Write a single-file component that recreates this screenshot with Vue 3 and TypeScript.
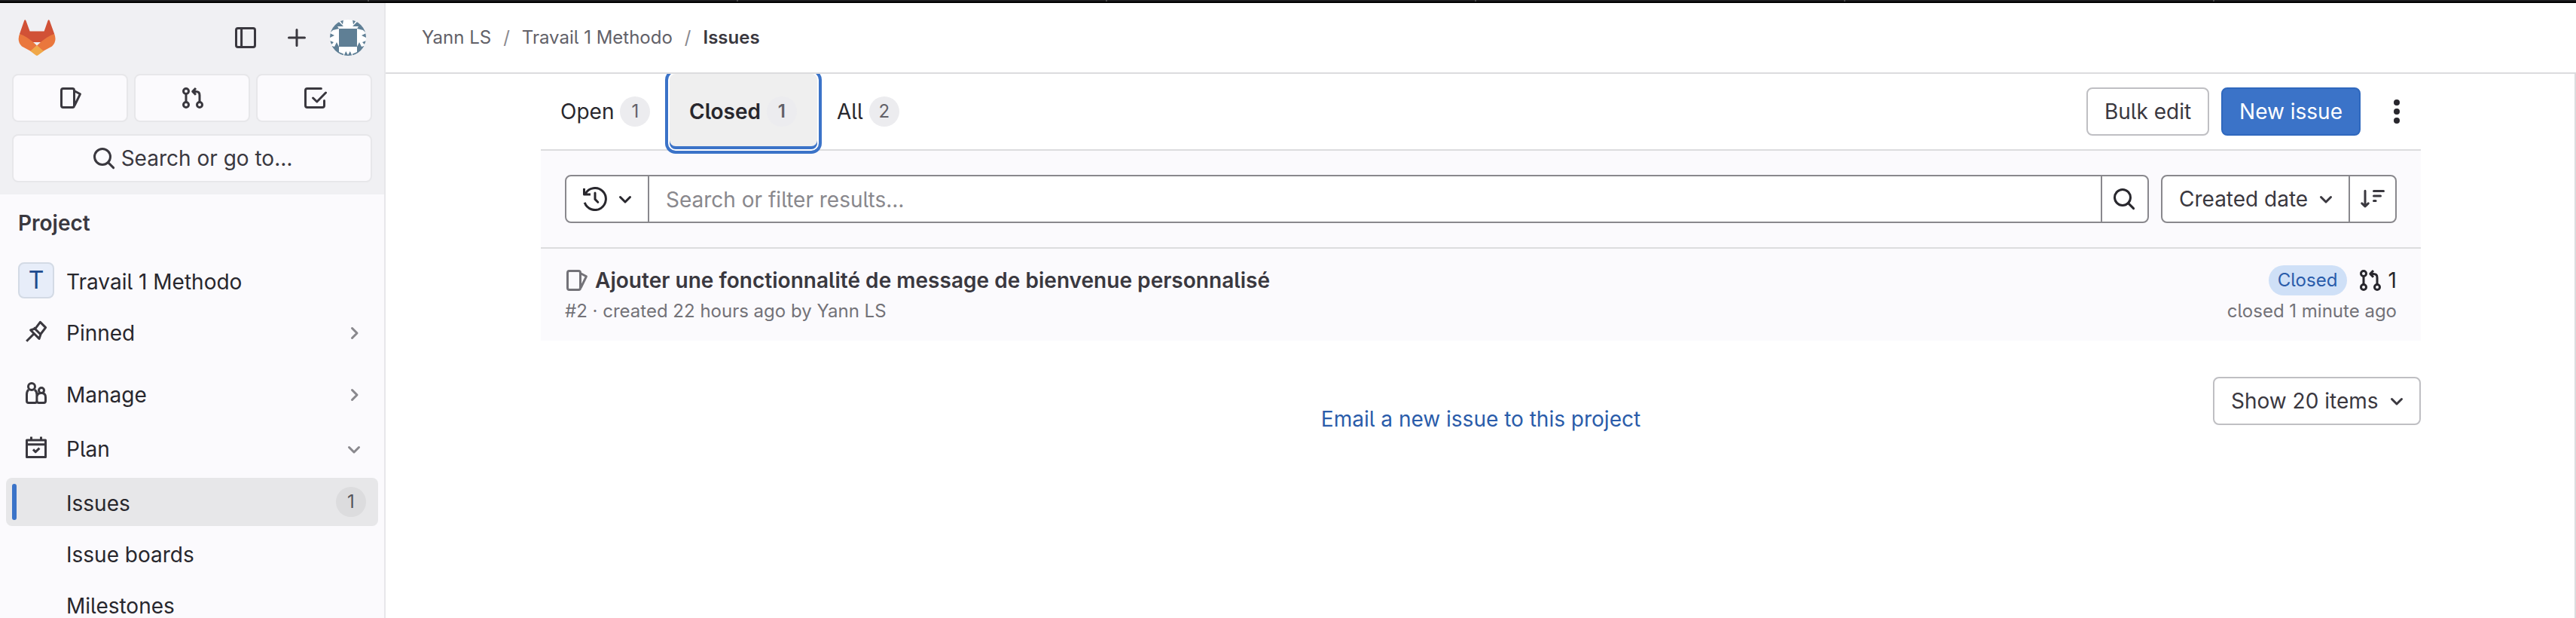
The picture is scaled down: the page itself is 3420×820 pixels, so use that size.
<script setup lang="ts">
interface NavItem {
  label: string
  icon?: string
  chevron?: string
  count?: number
  kind: string
}

const icons: Record<string, string> = {
  pin: 'M10.7 1.7l3.6 3.6-3.2 4.2-1.1 3.2-5.7-5.7 3.2-1.1zM6.6 9.4l-5 5M6.4 5.3l4.3 4.3',
  calendar: 'M4.75.7v2M11.25.7v2M1.75 3.05h12.5v11.2H1.75zM1.75 5.9h12.5M6 9.2l1.6 1.6 2.6-2.5',
}

const nav: NavItem[] = [
  { label: 'Pinned', icon: 'pin', chevron: 'right', kind: 'pinned' },
  { label: 'Manage', icon: 'people', chevron: 'right', kind: 'manage' },
  { label: 'Plan', icon: 'calendar', chevron: 'down', kind: 'plan' },
]
const sub: NavItem[] = [
  { label: 'Issues', count: 1, kind: 'active' },
  { label: 'Issue boards', kind: 'plain' },
  { label: 'Milestones', kind: 'plain' },
]
</script>

<template>
  <div class="page">
    <div class="strip"></div>
    <div class="body">
      <aside class="side">
        <div class="top">
          <div class="brand">
            <svg class="logo" viewBox="0 0 50 48">
              <path fill="#d15136" d="M2 19 8.2 1.2q1-2 2.2 0L15.6 15.6H34.600L39.600 1.200q1-2 2.200 0L48.200 19 40 30H10z" />
              <path fill="#ea773d" d="M2 19Q-1.800 29 5 35.500L17 42 25 34.400Q12 22 2 19zM48.200 19Q52 29 45 35.500L33 42 25 34.400Q38 22 48.200 19z" />
              <path fill="#f0a848" d="M16.200 41.700 25 34.400l9 7.300-7.500 5.600q-1.500 1-3 0z" />
            </svg>
            <div class="tools">
              <svg class="ico" viewBox="0 0 16 16"><rect x="1.75" y="1.75" width="12.500" height="12.500" rx="1.200" /><path d="M5.300 2v12" /></svg>
              <svg class="ico plus" viewBox="0 0 16 16"><path stroke-linecap="round" d="M8 2.750v10.500M2.750 8h10.500" /></svg>
              <svg class="avatar" viewBox="0 0 48 48">
                <defs>
                  <clipPath id="round"><circle cx="24" cy="24" r="24" /></clipPath>
                  <g id="corner">
                    <path d="M12 0l2.500 3L17 6.500 18 0zM0 18l4-4 8-2-2-3 8 0-5-5-4-4H0zM0 18l6 3-6 3zM0 28l5 2-3 3zM0 34l6 2 3-6 3 6v7l6 2.500V48H0z" />
                  </g>
                </defs>
                <g clip-path="url(#round)">
                  <rect width="48" height="48" fill="#fff" />
                  <g fill="#5f7f95">
                    <rect x="12" y="12" width="24" height="24" />
                    <use href="#corner" />
                    <use href="#corner" transform="matrix(-1 0 0 1 48 0)" />
                    <path d="m18.500 48 2.700-6 2.800 5 2.800-5 2.700 6z" />
                  </g>
                </g>
              </svg>
            </div>
          </div>
          <div class="shortcuts">
            <div class="tile">
              <svg class="ico" viewBox="0 0 16 16"><rect x="1.750" y="1.750" width="8.500" height="12.500" rx="1.200" /><path d="m10.700 3.500 3.500 1.900L10.500 13" /></svg>
            </div>
            <div class="tile">
              <svg class="ico" viewBox="0 0 16 16"><circle cx="3.500" cy="3.500" r="1.750" /><circle cx="3.500" cy="12.500" r="1.750" /><circle cx="12.500" cy="12.500" r="1.750" /><path d="M3.500 5.300v5.400M12.500 10.700V6.200q0-2.400-2.400-2.400H8.500M10 1.500 7.900 3.700 10 5.900" /></svg>
            </div>
            <div class="tile">
              <svg class="ico" viewBox="0 0 16 16"><path stroke-linecap="round" d="M12.200 1.750H3q-1.250 0-1.250 1.250v10q0 1.250 1.250 1.250h10q1.250 0 1.250-1.250V9.800M6.800 8l2.600 2.500 5.850-6" /></svg>
            </div>
          </div>
          <div class="goto">
            <svg class="ico" viewBox="0 0 16 16"><circle cx="7" cy="7" r="5.250" /><path stroke-linecap="round" d="m10.800 10.800 3.500 3.500" /></svg>
            <span>Search or go to…</span>
          </div>
        </div>
        <nav class="menu">
          <div class="heading">Project</div>
          <div class="row project"><span class="tee">T</span><span class="label">Travail 1 Methodo</span></div>
          <div v-for="n in nav" :key="n.label" class="row" :class="n.kind">
            <svg v-if="n.icon === 'people'" class="ico" viewBox="0 0 16 16"><circle cx="5" cy="3.500" r="2.250" /><circle cx="11.500" cy="6" r="1.750" /><path d="M3 5.600q-1.250 1-1.250 3v4.400q0 1.250 1.250 1.250h4.200q1.250 0 1.250-1.250V8.600q0-2-1.450-3M8.500 13q.1 1.250 1.250 1.250h3.250q1.250 0 1.250-1.250v-2.500q0-2.750-2.750-2.750T8.600 10" /></svg>
            <svg v-else class="ico" viewBox="0 0 16 16"><path :d="icons[n.icon!]" /></svg>
            <span class="label">{{ n.label }}</span>
            <svg class="ico chev" viewBox="0 0 16 16"><path stroke-linecap="round" :d="n.chevron === 'right' ? 'm6.750 4.750 3.250 3.250-3.250 3.250' : 'M4.750 6.750 8 10l3.250-3.250'" /></svg>
          </div>
          <div v-for="n in sub" :key="n.label" class="row sub" :class="n.kind">
            <span class="mark"></span>
            <span class="label">{{ n.label }}</span>
            <span v-if="n.count" class="count">{{ n.count }}</span>
          </div>
        </nav>
      </aside>

      <main class="main">
        <header class="crumbs">
          <span>Yann LS</span><i>/</i><span>Travail 1 Methodo</span><i>/</i><b>Issues</b>
        </header>
        <section class="content">
          <div class="wrap">
            <div class="tabs">
              <div class="tab open">Open<span class="pill">1</span></div>
              <div class="tab closed">Closed<span class="pill">1</span></div>
              <div class="tab all">All<span class="pill">2</span></div>
              <div class="actions">
                <button class="btn bulk">Bulk edit</button>
                <button class="btn new">New issue</button>
                <svg class="kebab" viewBox="0 0 16 16"><circle cx="8" cy="2" r="2" /><circle cx="8" cy="8" r="2" /><circle cx="8" cy="14" r="2" /></svg>
              </div>
            </div>
            <div class="filters">
              <div class="field">
                <div class="history">
                  <svg class="ico dark" viewBox="0 0 16 16"><path d="M1.100 10.400A7.250 7.250 0 1 0 1.600 4.500M.75 1V5H5" /><path stroke-linecap="round" d="M8 4v4.200l1.900 1.900" /></svg>
                  <svg class="ico dark" viewBox="0 0 16 16"><path stroke-linecap="round" d="M4.750 6.750 8 10l3.250-3.250" /></svg>
                </div>
                <div class="query">Search or filter results…</div>
                <div class="go"><svg class="ico dark" viewBox="0 0 16 16"><circle cx="7" cy="7" r="5.250" /><path stroke-linecap="round" d="m10.800 10.800 3.500 3.500" /></svg></div>
              </div>
              <div class="sort">
                <div class="by">Created date<svg class="ico" viewBox="0 0 16 16"><path stroke-linecap="round" d="M4.750 6.750 8 10l3.250-3.250" /></svg></div>
                <div class="dir"><svg class="ico" viewBox="0 0 16 16"><path stroke-linecap="round" d="M3 2.600v10.200M.9 10.900 3 12.900l2.100-2M8.750 2.750h6.500M8.750 6h4.500M8.750 9.250h1.300" /></svg></div>
              </div>
            </div>
            <div class="issue">
              <div class="left">
                <div class="title">
                  <svg class="ico" viewBox="0 0 16 16"><rect x="1.750" y="1.750" width="8.500" height="12.500" rx="1.200" /><path d="m10.700 3.500 3.500 1.900L10.500 13" /></svg>
                  <span>Ajouter une fonctionnalité de message de bienvenue personnalisé</span>
                </div>
                <div class="meta">#2 · created 22 hours ago by Yann LS</div>
              </div>
              <div class="right">
                <div class="state">
                  <span class="badge">Closed</span>
                  <svg class="ico dark" viewBox="0 0 16 16"><circle cx="3.500" cy="3.500" r="1.750" /><circle cx="3.500" cy="12.500" r="1.750" /><circle cx="12.500" cy="12.500" r="1.750" /><path d="M3.500 5.300v5.400M12.500 10.700V6.200q0-2.400-2.400-2.400H8.500M10 1.500 7.900 3.700 10 5.900" /></svg>
                  <span class="num">1</span>
                </div>
                <div class="meta">closed 1 minute ago</div>
              </div>
            </div>
            <div class="foot">
              <span></span>
              <a class="mail">Email a new issue to this project</a>
              <button class="btn show">Show 20 items<svg class="ico" viewBox="0 0 16 16"><path stroke-linecap="round" d="M4.750 6.750 8 10l3.250-3.250" /></svg></button>
            </div>
          </div>
        </section>
      </main>
    </div>
  </div>
</template>

<style>
body { margin: 0; background: #fff; overflow: hidden; }
</style>

<style scoped>
* { box-sizing: border-box; }
.page {
  width: 3420px; height: 820px; overflow: hidden;
  display: flex; flex-direction: column;
  font-family: Inter, "Liberation Sans", sans-serif;
  font-feature-settings: "cv05";
  font-size: 28px; line-height: 40px; color: #28272d; white-space: nowrap;
}
.strip { height: 4px; flex: none; background: repeating-linear-gradient(90deg, #1c1c1e 0 488px, #4a4a4c 488px 490px); border-bottom: 2px solid #000; }
.body { display: flex; flex: 1; min-height: 0; }
.ico { width: 32px; height: 32px; flex: none; fill: none; stroke: #3a383f; stroke-width: 1.5; stroke-linejoin: round; }
.ico.dark { stroke: #28272d; }

.side { width: 512px; flex: none; overflow: hidden; background: #fbfafd; border-right: 2px solid #e7e7ea; }
.top { height: 254px; background: #f0f0f3; padding: 22px 16px 16px; display: flex; flex-direction: column; color: #3a383f; }
.brand { height: 48px; display: flex; justify-content: space-between; padding: 0 8px; margin-bottom: 24px; }
.logo { width: 50px; height: 48px; }
.tools { display: flex; align-items: center; gap: 36px; }
.plus { margin-right: -8px; }
.avatar { width: 48px; height: 48px; }
.shortcuts { display: grid; grid-template-columns: repeat(3, 1fr); gap: 8px; margin-bottom: 16px; }
.tile, .goto { height: 64px; border: 2px solid #e7e7ea; border-radius: 8px; background: #fbfafd; display: flex; align-items: center; justify-content: center; }
.tile { padding-left: 2px; }
.goto { gap: 7px; }

.menu { padding: 16px 8px 0; }
.heading { height: 44px; line-height: 44px; padding-left: 16px; font-weight: 600; color: #3a383f; margin-bottom: 22px; }
.row { height: 64px; margin-bottom: 4px; display: flex; align-items: center; border-radius: 8px; padding: 0 16px 0 24px; }
.row .ico { margin-right: 24px; }
.row .chev { margin: 4px 0 0 auto; stroke: #89888d; }
.label { padding-top: 3px; }
.project { padding-left: 16px; }
.tee { width: 48px; height: 48px; margin-right: 16px; border: 2px solid #d3dae5; border-radius: 8px; background: #e7edf9; color: #1f4b8e; font-size: 32px; display: flex; align-items: center; justify-content: center; }
.pinned { margin-bottom: 18px; }
.manage, .plan { margin-bottom: 8px; }
.sub { padding-left: 8px; }
.mark { width: 6px; height: 48px; border-radius: 3px; margin-right: 66px; }
.active { background: #e7e7e9; }
.active .mark { background: #3b73c8; }
.count { margin-left: auto; width: 40px; height: 40px; border-radius: 20px; background: #dcdcde; color: #56555b; font-size: 24px; text-align: center; }

.main { flex: 1; display: flex; flex-direction: column; min-width: 0; }
.crumbs { height: 94px; flex: none; border-bottom: 2px solid #dcdcde; padding: 0 48px; display: flex; align-items: center; font-size: 24px; color: #626168; }
.crumbs i { font-style: normal; color: #89888d; margin: 0 16px; }
.crumbs b { font-weight: 600; color: #3a383f; }
.content { flex: 1; overflow: hidden; border-right: 2px solid #dcdcde; padding-left: 206px; }
.wrap { width: 2496px; }
.tabs { height: 102px; border-bottom: 2px solid #dcdcde; display: flex; align-items: center; }
.tab { height: 100px; display: flex; align-items: center; }
.pill { width: 40px; height: 40px; margin-left: 8px; border-radius: 20px; background: #ececef; color: #626168; font-size: 24px; text-align: center; }
.open { padding-left: 26px; width: 171px; }
.closed { width: 196px; padding-left: 26px; font-weight: 600; background: #efefef; border-radius: 8px; box-shadow: inset 0 -4px 0 #3b73c8, 0 0 0 2px #fff, 0 0 0 6px #3b73c8; position: relative; }
.all { padding-left: 26px; }
.actions { margin-left: auto; display: flex; align-items: center; gap: 16px; }
.btn { height: 64px; border: 2px solid #bfbfc3; border-radius: 8px; background: #fff; color: #3a383f; font: inherit; font-feature-settings: inherit; padding: 0; display: flex; align-items: center; justify-content: center; }
.bulk { width: 163px; }
.new { width: 185px; background: #3b73c8; border-color: #2f68be; color: #fff; }
.kebab { width: 64px; height: 32px; fill: #28272d; }
.filters { height: 130px; background: #fbfafd; border-bottom: 2px solid #dcdcde; padding: 32px; display: flex; gap: 16px; }
.field { flex: 1; display: flex; height: 64px; background: #fff; border: 2px solid #89888d; border-radius: 8px; }
.history { width: 110px; border-right: 2px solid #89888d; padding-left: 22px; display: flex; align-items: center; gap: 8px; }
.query { flex: 1; padding-left: 22px; line-height: 62px; color: #89888d; }
.go { width: 62px; border-left: 2px solid #89888d; padding-left: 13px; display: flex; align-items: center; }
.sort { width: 313px; height: 64px; display: flex; background: #fff; border: 2px solid #89888d; border-radius: 8px; color: #3a383f; }
.by { flex: 1; padding: 0 14px 0 22px; display: flex; align-items: center; justify-content: space-between; }
.dir { width: 62px; border-left: 2px solid #89888d; display: flex; align-items: center; justify-content: center; }
.issue { height: 122px; background: #fbfafd; padding: 20px 32px 0; display: flex; justify-content: space-between; }
.title { height: 44px; display: flex; align-items: center; gap: 8px; font-weight: 600; letter-spacing: .03px; color: #3a383f; }
.title .ico { stroke: #737278; }
.meta { font-size: 24px; line-height: 38px; color: #737278; }
.right { display: flex; flex-direction: column; align-items: flex-end; }
.state { height: 44px; display: flex; align-items: center; }
.badge { width: 104px; height: 40px; border-radius: 20px; background: #cfe0f7; color: #2a5caa; font-size: 24px; text-align: center; margin-right: 15px; }
.num { margin-left: 8px; }
.foot { display: grid; grid-template-columns: 1fr auto 1fr; padding-top: 48px; }
.mail { color: #2a5caa; margin-top: 36px; }
.show { width: 276px; justify-self: end; justify-content: space-between; padding: 0 14px 0 22px; }
</style>
